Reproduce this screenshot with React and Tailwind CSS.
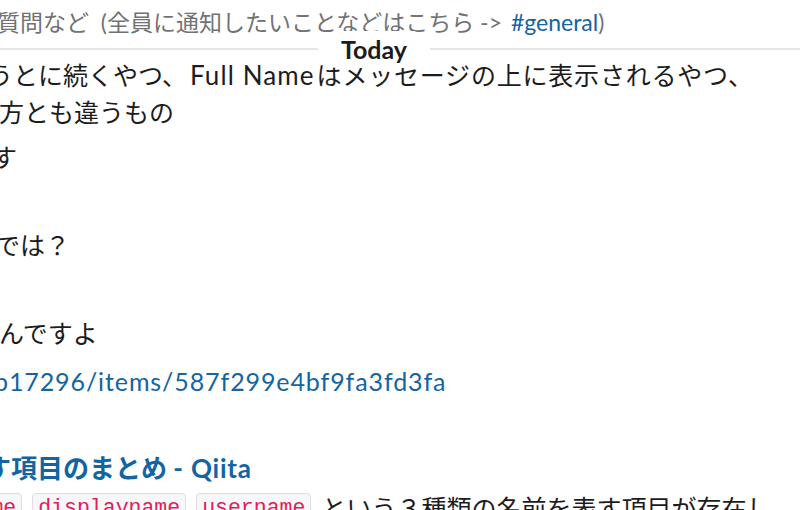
const font = { fontFamily: '"Lato", "Noto Sans CJK JP", sans-serif' };

const Chip = ({ children }) => (
  <span className="rounded-[4px] border border-[#dddde3] bg-[#f7f7f9] px-[5px] pt-[2px] pb-[6px] font-['Liberation_Mono',monospace] text-[21.5px] leading-[24px] text-[#e01e5a]">
    {children}
  </span>
);

export default function App() {
  return (
    <div
      className="relative h-[510px] w-[800px] overflow-hidden bg-white text-[#1d1c1d]"
      style={font}
    >
      {/* channel topic */}
      <div className="-ml-[3px] flex h-[44px] items-center whitespace-nowrap text-[23px] text-[#717274]">
        質問など&nbsp; (全員に通知したいことなどはこちら -&gt;&nbsp;
        <span className="ml-[3px] text-[#1264a3]">#general</span>)
      </div>

      {/* messages */}
      <div className="whitespace-nowrap text-[25px] leading-[37px]">
        <div className="-ml-[12px] mt-[13px]">
          うとに続くやつ、<span className="ml-[3px] mr-[2px] text-[26px] tracking-[1.1px]">Full Name</span><span className="tracking-[0.8px]">はメッセージの上に表示されるやつ、</span>
        </div>
        <div className="-ml-[1px]">方とも違うもの</div>
        <div className="-ml-[8px] mt-[8px]">す</div>
        <div className="-ml-[5px] mt-[51px]">では？</div>
        <div className="-ml-[1px] mt-[51px]">んですよ</div>
        <div className="-ml-[6px] mt-[11px] tracking-[0.9px] text-[#1264a3]">
          b17296/items/587f299e4bf9fa3fd3fa
        </div>
        <div className="-ml-[15px] mt-[50px] text-[26px] font-bold text-[#1264a3]">
          す項目のまとめ <span className="tracking-[0.8px]">- Qiita</span>
        </div>
        <div className="-ml-[93px] mt-[6px] flex items-start gap-[10px]">
          <Chip>fullname</Chip>
          <Chip>displayname</Chip>
          <Chip>username</Chip>
          <span className="leading-[30px]">という３種類の名前を表す項目が存在し</span>
        </div>
      </div>

      {/* sticky day divider */}
      <div className="absolute inset-x-0 top-[48px] h-[2px] bg-[#e6e6e6]" />
      <div className="absolute left-[318px] top-[31px] flex h-[37px] w-[112px] items-center justify-center rounded-full bg-white text-[25px] font-bold text-[#1d1c1d]">
        Today
      </div>
    </div>
  );
}
